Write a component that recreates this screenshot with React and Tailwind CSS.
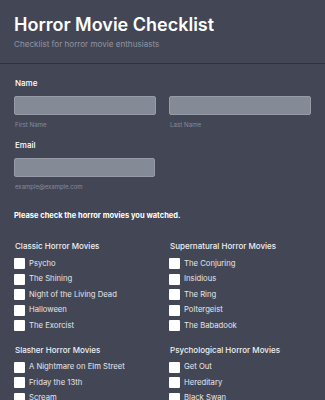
const groups = [
  {
    title: "Classic Horror Movies",
    items: ["Psycho", "The Shining", "Night of the Living Dead", "Halloween", "The Exorcist"],
  },
  {
    title: "Supernatural Horror Movies",
    items: ["The Conjuring", "Insidious", "The Ring", "Poltergeist", "The Babadook"],
  },
  {
    title: "Slasher Horror Movies",
    items: ["A Nightmare on Elm Street", "Friday the 13th", "Scream", "Texas Chainsaw Massacre", "Halloween II"],
  },
  {
    title: "Psychological Horror Movies",
    items: ["Get Out", "Hereditary", "Black Swan", "The Silence of the Lambs", "Midsommar"],
  },
];

function Group({ g, first }) {
  return (
    <div className={first ? "mt-[18px]" : "mt-[10px]"}>
      <div className="pl-[1px] text-[8px] leading-[12px] font-medium text-[#eef0f4]">{g.title}</div>
      <div className="mt-[4px]">
        {g.items.map((it) => (
          <label key={it} className="flex items-center h-[15.5px]">
            <span className="w-[11px] h-[11px] bg-white rounded-[1px] shrink-0" />
            <span className="ml-[4px] text-[7.7px] leading-[12px] text-[#e4e6ec]">{it}</span>
          </label>
        ))}
      </div>
    </div>
  );
}

export default function App() {
  return (
    <div
      className="w-[325px] h-[400px] overflow-hidden bg-[#434755] text-white"
      style={{ fontFamily: "Inter, 'Noto Sans', sans-serif" }}
    >
      <div className="px-[14px] pt-[14px] pb-[13px] border-b border-[#2f323c]">
        <h1 className="text-[18px] leading-[22px] font-semibold text-white">Horror Movie Checklist</h1>
        <p className="mt-[2px] text-[8.1px] leading-[12px] text-[#8f94a2]">
          Checklist for horror movie enthusiasts
        </p>
      </div>

      <div className="px-[14px] pt-[12px]">
        <div className="pl-[1px] text-[8px] leading-[14px] font-medium text-white">Name</div>
        <div className="grid grid-cols-2 gap-x-[13px] mt-[6px]">
          <div>
            <div className="h-[19px] bg-[#858a97] border border-[#979ba7] rounded-[2px]" />
            <div className="mt-[5px] pl-[1px] text-[6.2px] leading-[10px] text-[#878b99]">First Name</div>
          </div>
          <div>
            <div className="h-[19px] bg-[#858a97] border border-[#979ba7] rounded-[2px]" />
            <div className="mt-[5px] pl-[1px] text-[6.2px] leading-[10px] text-[#878b99]">Last Name</div>
          </div>
        </div>

        <div className="mt-[8px] pl-[1px] text-[8px] leading-[14px] font-medium text-white">Email</div>
        <div className="mt-[6px] w-[141px] h-[19px] bg-[#858a97] border border-[#979ba7] rounded-[2px]" />
        <div className="mt-[5px] pl-[1px] text-[6px] leading-[10px] text-[#878b99]">example@example.com</div>

        <div className="mt-[18px] text-[7.5px] leading-[12px] font-bold text-white">
          Please check the horror movies you watched.
        </div>

        <div className="grid grid-cols-2 gap-x-[13px]">
          <Group g={groups[0]} first />
          <Group g={groups[1]} first />
          <Group g={groups[2]} />
          <Group g={groups[3]} />
        </div>
      </div>
    </div>
  );
}
